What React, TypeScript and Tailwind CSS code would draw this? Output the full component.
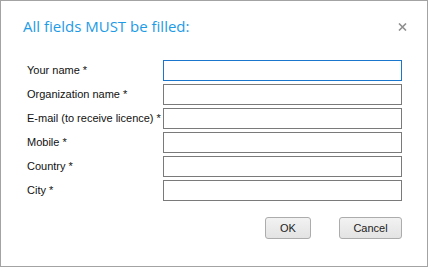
import React from 'react';

const FIELDS = [
  'Your name *',
  'Organization name *',
  'E-mail (to receive licence) *',
  'Mobile *',
  'Country *',
  'City *',
];

export default function App(): JSX.Element {
  return (
    <div className="w-[429px] h-[269px] bg-white">
      <div className="w-[428px] h-[267px] border border-[#a3a3a3] bg-white flex flex-col font-['Liberation_Sans',Arial,sans-serif]">
        {/* header */}
        <div className="h-[59px] flex items-start justify-between pl-[22px] pr-[20px] pt-[15px]">
          <h1 className="text-[15px] leading-[20px] text-[#1e9be6] font-['Open_Sans',sans-serif]">
            All fields MUST be filled:
          </h1>
          <button type="button" className="mt-[7px] w-[9px] h-[8px] flex items-center justify-center">
            <svg width="9" height="8" viewBox="0 0 9 8">
              <path d="M1 0.5 L8 7.5 M8 0.5 L1 7.5" stroke="#8f8f8f" strokeWidth="1.6" />
            </svg>
          </button>
        </div>

        {/* form */}
        <div className="grid grid-cols-[136px_239px] gap-y-[3px] pl-[26px]">
          {FIELDS.map((label, i) => (
            <React.Fragment key={label}>
              <label className="text-[11px] leading-[21px] text-[#111]">{label}</label>
              <input
                type="text"
                className={
                  i === 0
                    ? 'h-[21px] w-[239px] border border-[#1a76cc] bg-white outline-none'
                    : 'h-[21px] w-[239px] border border-[#7a7a7a] bg-white outline-none'
                }
              />
            </React.Fragment>
          ))}
        </div>

        {/* buttons */}
        <div className="flex justify-end gap-[28px] pr-[25px] mt-[16px]">
          <button
            type="button"
            className="w-[46px] h-[22px] rounded-[3px] border border-[#acacac] bg-gradient-to-b from-[#f2f2f2] to-[#e3e3e3] text-[11px] text-[#222]"
          >
            OK
          </button>
          <button
            type="button"
            className="w-[63px] h-[22px] rounded-[3px] border border-[#acacac] bg-gradient-to-b from-[#f2f2f2] to-[#e3e3e3] text-[11px] text-[#222]"
          >
            Cancel
          </button>
        </div>
      </div>
    </div>
  );
}
